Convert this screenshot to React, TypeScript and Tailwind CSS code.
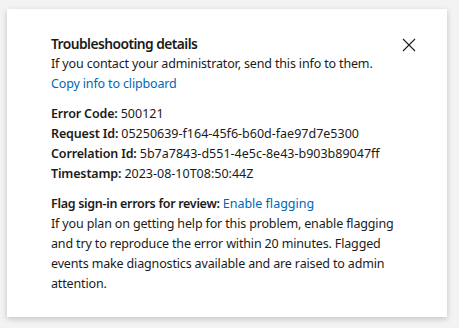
export default function App() {
  const rows = [
    { label: "Error Code:", value: "500121" },
    { label: "Request Id:", value: "05250639-f164-45f6-b60d-fae97d7e5300" },
    { label: "Correlation Id:", value: "5b7a7843-d551-4e5c-8e43-b903b89047ff" },
    { label: "Timestamp:", value: "2023-08-10T08:50:44Z" },
  ];

  return (
    <div
      className="min-h-[328px] w-[459px] bg-[#f3f3f3] pl-[7px] pt-[9px]"
      style={{ fontFamily: '"Noto Sans", "Open Sans", sans-serif' }}
    >
      <div className="relative w-[440px] bg-white pl-[44px] pr-[44px] pt-[25px] pb-[23px] text-[12.5px] leading-[20px] tracking-[-0.15px] text-[#1b1b1b] shadow-[0_2px_6px_rgba(0,0,0,0.2)]">
        <button className="absolute right-[31px] top-[29px] flex h-[14px] w-[14px] items-center justify-center text-[#1b1b1b]">
          <svg width="14" height="14" viewBox="0 0 14 14" fill="none" stroke="currentColor" strokeWidth="1.1">
            <path d="M1 1 L13 13 M13 1 L1 13" />
          </svg>
        </button>

        <h2 className="text-[13.8px] font-semibold leading-[20px] tracking-[-0.55px] text-[#1b1b1b]">Troubleshooting details</h2>
        <p>If you contact your administrator, send this info to them.</p>
        <a className="text-[#0067b8]">Copy info to clipboard</a>

        <div className="mt-[10px]">
          {rows.map((r) => (
            <div key={r.label}>
              <span className="font-semibold">{r.label}</span> <span className="tracking-normal">{r.value}</span>
            </div>
          ))}
        </div>

        <div className="mt-[10px]">
          <div>
            <span className="font-semibold tracking-[-0.3px]">Flag sign-in errors for review:</span>{" "}
            <a className="tracking-normal text-[#0067b8]">Enable flagging</a>
          </div>
          <p>
            If you plan on getting help for this problem, enable flagging and try to reproduce the error within 20
            minutes. Flagged events make diagnostics available and are raised to admin attention.
          </p>
        </div>
      </div>
    </div>
  );
}
